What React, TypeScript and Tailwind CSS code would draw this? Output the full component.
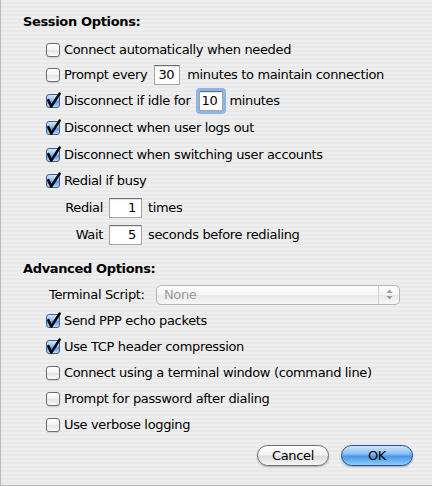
import React from 'react'

const FONT = "font-['DejaVu_Sans',sans-serif] tracking-[-0.35px]"

function Check({ on }: { on?: boolean }) {
  return (
    <span className="relative inline-block w-[14px] h-[14px] shrink-0">
      <span
        className={
          on
            ? 'absolute inset-0 rounded-[3px] border border-[#3f5f95] bg-[linear-gradient(#d4e7fc,#8ebcf0_45%,#5f9de6_55%,#b5d8fb)]'
            : 'absolute inset-0 rounded-[3px] border border-[#6f6f6f] bg-[linear-gradient(#ffffff,#f4f4f4_45%,#e4e4e4_55%,#fbfbfb)] shadow-[0_1px_1px_rgba(0,0,0,0.12)]'
        }
      />
      {on && (
        <svg className="absolute -top-[2px] left-0" width="16" height="17" viewBox="0 0 16 17">
          <path d="M2.4 8.2 L5.2 14.6 L13.6 1.6" stroke="#000" strokeWidth="2.6" fill="none" strokeLinecap="round" strokeLinejoin="round" />
        </svg>
      )}
    </span>
  )
}

function Field({ value, w, focus }: { value: string; w: string; focus?: boolean }) {
  return (
    <span
      className={`inline-block ${w} h-[20px] bg-white border border-[#a5a5a5] border-t-[#6e6e6e] text-right pr-[5px] leading-[18px] shadow-[inset_0_1px_1px_rgba(0,0,0,0.12)] ${
        focus ? 'outline outline-[3px] outline-[#8cb6ea] rounded-[1px]' : ''
      }`}
    >
      {value}
    </span>
  )
}

function Row({ h, children }: { h: string; children: React.ReactNode }) {
  return <div className={`flex items-center ${h} pl-[45px]`}>{children}</div>
}

function CheckRow({ h, on, label }: { h: string; on?: boolean; label: string }) {
  return (
    <Row h={h}>
      <Check on={on} />
      <span className="ml-[4px]">{label}</span>
    </Row>
  )
}

export default function App() {
  return (
    <div
      className={`w-[432px] h-[486px] overflow-hidden ${FONT} text-[13px] text-black border-l border-b border-[#b9b9b9] bg-[repeating-linear-gradient(180deg,#eeeeee_0px,#eeeeee_2px,#e9e9e9_2px,#e9e9e9_4px)]`}
    >
      <div className="pt-[13px]">
        {/* Session options */}
        <div className="h-[18px] pl-[22px] font-bold leading-[18px]">Session Options:</div>
        <div className="mt-[6px]">
          <CheckRow h="h-[25px]" label="Connect automatically when needed" />
          <Row h="h-[26px]">
            <Check />
            <span className="ml-[4px]">Prompt every</span>
            <span className="ml-[7px]"><Field value="30" w="w-[26px]" /></span>
            <span className="ml-[7px]">minutes to maintain connection</span>
          </Row>
          <Row h="h-[26px]">
            <Check on />
            <span className="ml-[4px]">Disconnect if idle for</span>
            <span className="ml-[9px]"><Field value="10" w="w-[24px]" focus /></span>
            <span className="ml-[6px]">minutes</span>
          </Row>
          <CheckRow h="h-[28px]" on label="Disconnect when user logs out" />
          <CheckRow h="h-[25px]" on label="Disconnect when switching user accounts" />
          <CheckRow h="h-[27px]" on label="Redial if busy" />
          <div className="flex items-center h-[28px]">
            <span className="w-[102px] text-right">Redial</span>
            <span className="ml-[6px]"><Field value="1" w="w-[33px]" /></span>
            <span className="ml-[6px]">times</span>
          </div>
          <div className="flex items-center h-[26px]">
            <span className="w-[102px] text-right">Wait</span>
            <span className="ml-[6px]"><Field value="5" w="w-[33px]" /></span>
            <span className="ml-[6px]">seconds before redialing</span>
          </div>
        </div>

        {/* Advanced options */}
        <div className="mt-[12px] h-[18px] pl-[22px] font-bold leading-[18px]">Advanced Options:</div>
        <div className="mt-[3px]">
          <div className="flex items-center h-[27px] pl-[48px]">
            <span>Terminal Script:</span>
            <div className="ml-auto mr-[32px] w-[244px] h-[20px] flex items-center rounded-[5px] border border-[#b4b4b4] bg-[linear-gradient(#fdfdfd,#f4f4f4_50%,#e9e9e9_51%,#f7f7f7)]">
              <span className="pl-[7px] text-[#9b9b9b] flex-1">None</span>
              <span className="h-full w-[21px] border-l border-[#cfcfcf] flex flex-col items-center justify-center">
                <svg width="7" height="11" viewBox="0 0 7 11">
                  <path d="M3.5 0.5 L6.5 4 H0.5 Z" fill="#9b9b9b" />
                  <path d="M3.5 10.5 L6.5 7 H0.5 Z" fill="#9b9b9b" />
                </svg>
              </span>
            </div>
          </div>
          <CheckRow h="h-[26px]" on label="Send PPP echo packets" />
          <CheckRow h="h-[26px]" on label="Use TCP header compression" />
          <CheckRow h="h-[26px]" label="Connect using a terminal window (command line)" />
          <CheckRow h="h-[26px]" label="Prompt for password after dialing" />
          <CheckRow h="h-[26px]" label="Use verbose logging" />
        </div>

        {/* Buttons */}
        <div className="mt-[7px] flex justify-end gap-[12px] pr-[19px]">
          <button className="w-[72px] h-[21px] rounded-full border border-[#6d6d6d] bg-[linear-gradient(#ffffff,#f3f3f3_45%,#dedede_55%,#f6f6f6)] shadow-[0_1px_2px_rgba(0,0,0,0.25)] leading-[19px]">
            Cancel
          </button>
          <button className="w-[72px] h-[21px] rounded-full border border-[#27509a] bg-[linear-gradient(#cfe4fb,#8ec0f3_40%,#4b95ea_55%,#8ad0fb)] shadow-[0_1px_2px_rgba(0,0,0,0.3)] leading-[19px]">
            OK
          </button>
        </div>
      </div>
    </div>
  )
}
